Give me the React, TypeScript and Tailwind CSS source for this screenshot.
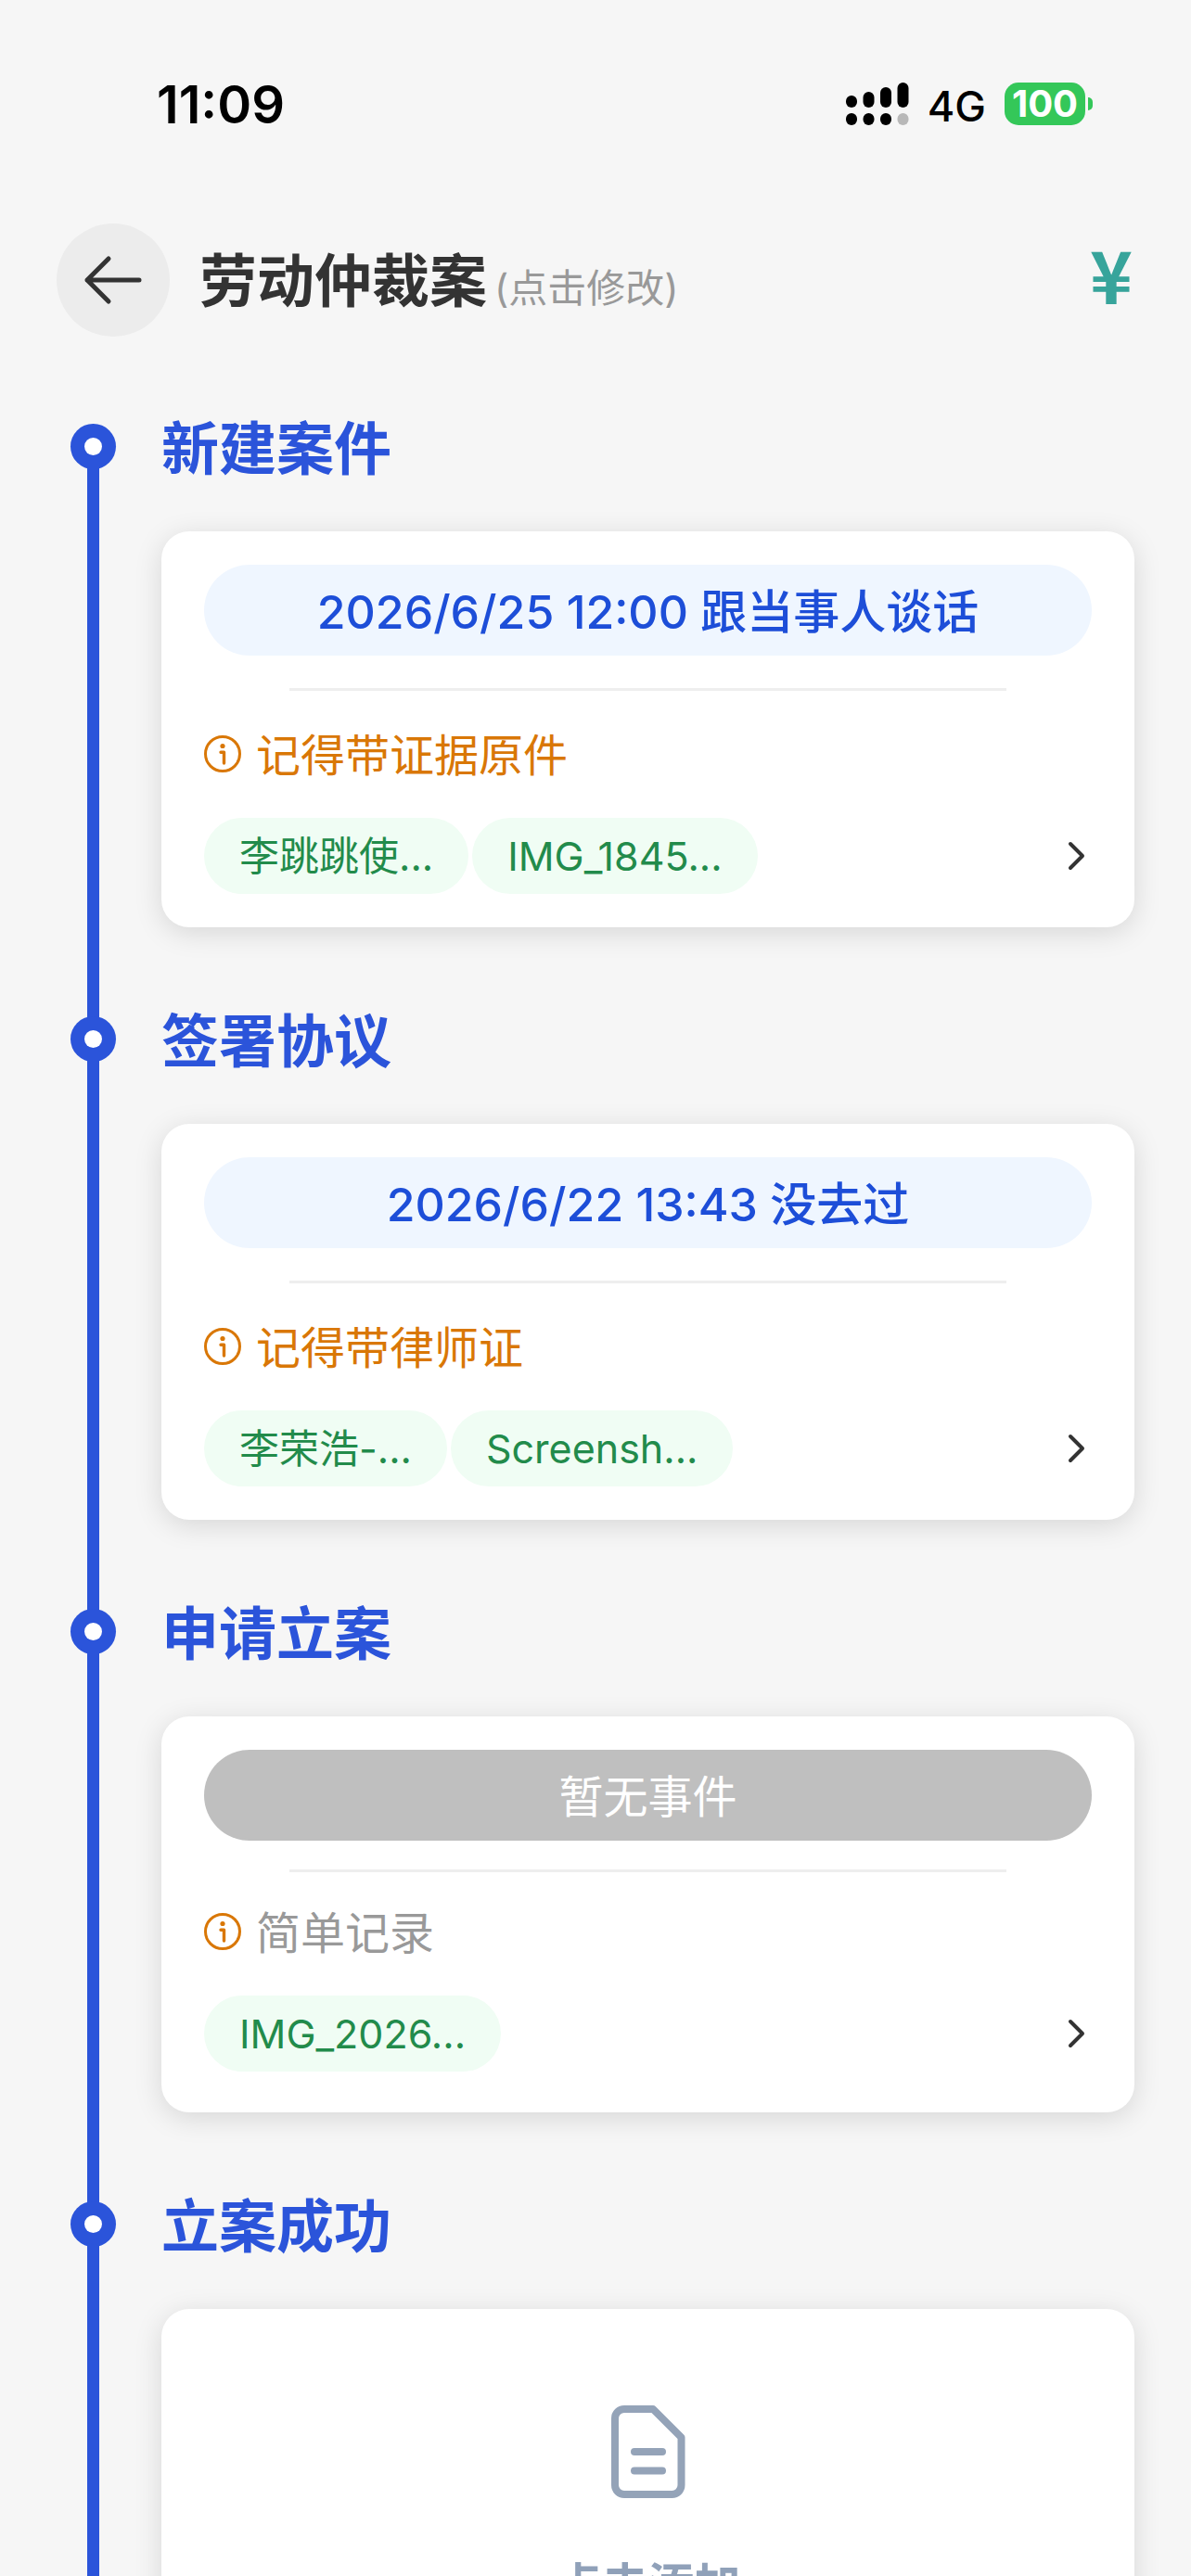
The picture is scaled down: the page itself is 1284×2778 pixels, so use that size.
import React from 'react';

interface Stage {
  title: string;
  event?: string;
  note?: string;
  files: string[];
}

const stages: Stage[] = [
  {
    title: '新建案件',
    event: '2026/6/25 12:00 跟当事人谈话',
    note: '记得带证据原件',
    files: ['李跳跳使...', 'IMG_1845...'],
  },
  {
    title: '签署协议',
    event: '2026/6/22 13:43 没去过',
    note: '记得带律师证',
    files: ['李荣浩-...', 'Screensh...'],
  },
  {
    title: '申请立案',
    files: ['IMG_2026...'],
  },
  {
    title: '立案成功',
    files: [],
  },
];

const SignalIcon: React.FC = () => (
  <svg className="w-[68px] h-[46px]" viewBox="0 0 68 46" aria-hidden="true">
    <rect x="0" y="14" width="12" height="13" rx="6" />
    <rect x="18.5" y="10" width="12" height="17" rx="6" />
    <rect x="37" y="5" width="12" height="22" rx="6" />
    <rect x="55.5" y="0" width="12" height="27" rx="6" />
    <rect x="0" y="33" width="12" height="13" rx="6" />
    <rect x="18.5" y="33" width="12" height="13" rx="6" />
    <rect x="37" y="33" width="12" height="13" rx="6" />
    <rect x="55.5" y="33" width="12" height="13" rx="6" fill="#b8b8b8" />
  </svg>
);

const InfoIcon: React.FC = () => (
  <svg className="w-10 h-10 shrink-0" viewBox="0 0 40 40" fill="none" stroke="#d97706" aria-hidden="true">
    <circle cx="20" cy="20" r="18.5" strokeWidth="3" />
    <circle cx="20" cy="11.5" r="2.6" fill="#d97706" stroke="none" />
    <path d="M18 18.2h3.5V30" strokeWidth="3.4" strokeLinecap="round" strokeLinejoin="round" />
  </svg>
);

const DocIcon: React.FC = () => (
  <svg
    className="w-20 h-[100px]"
    viewBox="0 0 80 100"
    fill="none"
    stroke="#94a3b8"
    strokeWidth="8"
    strokeLinecap="round"
    strokeLinejoin="round"
    aria-hidden="true"
  >
    <path d="M14 4H45L75.500 34.500V86a10 10 0 0 1-10 10H14A10 10 0 0 1 4 86V14A10 10 0 0 1 14 4Z" />
    <path d="M25 50H55M25 70.500H55" />
  </svg>
);

const StatusBar: React.FC = () => (
  <div className="flex items-center justify-between h-[224px] pl-[169px] pr-[106px] font-['Inter',sans-serif] text-black">
    <span className="pt-0.5 text-[56px] font-semibold leading-none">11:09</span>
    <div className="flex items-center">
      <SignalIcon />
      <span className="ml-5 pt-1 text-[45px] leading-none font-medium">4G</span>
      <div className="ml-5 flex items-center gap-[3px]">
        <span className="flex items-center justify-center w-[87px] h-[46px] rounded-[15px] bg-[#34c759] text-[40px] font-bold leading-none text-white">
          100
        </span>
        <span className="w-[5px] h-[14px] rounded-r-full bg-[#34c759]"></span>
      </div>
    </div>
  </div>
);

const StageCard: React.FC<{ stage: Stage }> = ({ stage }) => {
  const { event, note, files } = stage;

  if (files.length === 0) {
    return (
      <button
        type="button"
        className="flex flex-col items-center w-full min-h-[427px] pt-[104px] rounded-[30px] bg-white shadow-[0_6px_30px_rgba(0,0,0,0.13)]"
      >
        <DocIcon />
        <span className="mt-16 text-[50px] leading-[60px] font-semibold text-slate-400">点击添加</span>
      </button>
    );
  }

  return (
    <div className="min-h-[427px] px-[46px] py-9 rounded-[30px] bg-white shadow-[0_6px_30px_rgba(0,0,0,0.13)]">
      {event ? (
        <button
          type="button"
          className="block w-full h-[98px] pt-1 rounded-full bg-[#eff6ff] text-[50px] leading-none font-medium text-[#1d4ed8]"
        >
          {event}
        </button>
      ) : (
        <button
          type="button"
          className="block w-full h-[98px] pt-1 rounded-full bg-[#bfbfbf] text-[48px] leading-none text-white"
        >
          暂无事件
        </button>
      )}
      <hr className={`mx-[92px] h-[3px] border-0 bg-[#eeeeee] ${event ? 'mt-[35px] mb-[41px]' : 'mt-[31px] mb-[37px]'}`} />
      <div className="flex items-center gap-4 h-[54px] text-[48px] leading-none">
        <InfoIcon />
        {note ? <p className="pt-1 text-[#d97706]">{note}</p> : <p className="pt-1 text-[#999999]">简单记录</p>}
      </div>
      <div className="flex items-center mt-[42px]">
        <div className="flex gap-1">
          {files.map((file) => (
            <a
              key={file}
              href="#"
              className="flex items-center h-[82px] px-[38px] rounded-full bg-[#f0fdf4] text-[43px] leading-none text-[#228b4b]"
            >
              {file}
            </a>
          ))}
        </div>
        <button type="button" aria-label="查看文件" className="ml-auto mr-1">
          <svg className="w-6 h-9" viewBox="0 0 24 36" fill="none" stroke="#333333" strokeWidth="4" aria-hidden="true">
            <path d="M5 5L18 18L5 31" strokeLinecap="round" strokeLinejoin="round" />
          </svg>
        </button>
      </div>
    </div>
  );
};

const App: React.FC = () => {
  return (
    <div className="h-screen overflow-hidden bg-[#f6f6f6] font-['Inter','Noto_Sans_CJK_SC',sans-serif]">
      <StatusBar />

      {/* Case header */}
      <header className="flex items-center h-[156px] px-[61px]">
        <button
          type="button"
          aria-label="返回"
          className="flex items-center justify-center w-[122px] h-[122px] rounded-full bg-[#ececec]"
        >
          <svg className="w-16 h-14" viewBox="0 0 64 56" fill="none" stroke="#333333" strokeWidth="5" aria-hidden="true">
            <path d="M60 28H4M27 5L4 28L27 51" strokeLinecap="round" strokeLinejoin="round" />
          </svg>
        </button>
        <button type="button" className="flex items-baseline gap-2 ml-8 pt-1 leading-none">
          <span className="text-[62px] font-semibold text-[#333333]">劳动仲裁案</span>
          <span className="text-[42px] text-[#999999]">(点击修改)</span>
        </button>
        <button
          type="button"
          aria-label="费用"
          className="ml-auto mr-0.5 pb-4 font-['Noto_Sans_CJK_SC',sans-serif] text-[78px] leading-none font-bold text-[#37a49b]"
        >
          ¥
        </button>
      </header>

      {/* Timeline */}
      <ol className="pt-[77px] pl-[76px] pr-[61px]">
        {stages.map((stage) => (
          <li key={stage.title} className="flex gap-[49px]">
            <div className="flex flex-col items-center w-[49px]">
              <span className="flex items-center justify-center w-[49px] h-[49px] rounded-full bg-[#2b54da]">
                <span className="w-[19px] h-[19px] rounded-full bg-white"></span>
              </span>
              <span className="w-[13px] flex-1 -my-1 bg-[#2b54da]"></span>
            </div>
            <div className="flex-1 pb-24">
              <h2 className="mb-15 text-[62px] leading-[56px] font-semibold text-[#2b54da]">{stage.title}</h2>
              <StageCard stage={stage} />
            </div>
          </li>
        ))}
      </ol>
    </div>
  );
};

export default App;
